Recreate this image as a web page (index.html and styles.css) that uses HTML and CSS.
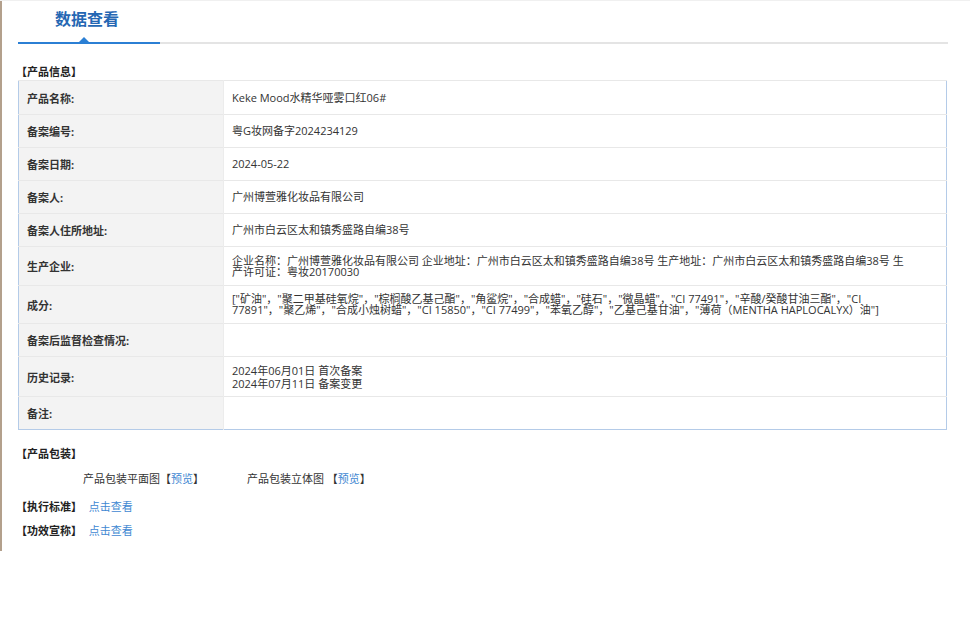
FILE: index.html
```html
<!DOCTYPE html>
<html lang="zh-CN">
<head>
<meta charset="utf-8">
<title>数据查看</title>
<link rel="stylesheet" href="styles.css">
</head>
<body>
<div class="page">
  <div class="tabs">
    <div class="tab-active">数据查看</div>
    <div class="tab-rest"></div>
  </div>

  <div class="sec-title">【产品信息】</div>
  <table class="info">
    <colgroup><col class="c-label"><col></colgroup>
    <tr class="first"><th>产品名称:</th><td>Keke Mood水精华哑雾口红06#</td></tr>
    <tr><th>备案编号:</th><td>粤G妆网备字2024234129</td></tr>
    <tr><th>备案日期:</th><td>2024-05-22</td></tr>
    <tr><th>备案人:</th><td>广州博萱雅化妆品有限公司</td></tr>
    <tr><th>备案人住所地址:</th><td>广州市白云区太和镇秀盛路自编38号</td></tr>
    <tr class="multi"><th>生产企业:</th><td>企业名称：广州博萱雅化妆品有限公司 企业地址：广州市白云区太和镇秀盛路自编38号 生产地址：广州市白云区太和镇秀盛路自编38号 生产许可证：粤妆20170030</td></tr>
    <tr class="multi ingr"><th>成分:</th><td>["矿油"，"聚二甲基硅氧烷"，"棕榈酸乙基己酯"，"角鲨烷"，"合成蜡"，"硅石"，"微晶蜡"，"CI 77491"，"辛酸/癸酸甘油三酯"，"CI 77891"，"聚乙烯"，"合成小烛树蜡"，"CI 15850"，"CI 77499"，"苯氧乙醇"，"乙基己基甘油"，"薄荷（MENTHA HAPLOCALYX）油"]</td></tr>
    <tr><th>备案后监督检查情况:</th><td></td></tr>
    <tr class="multi hist"><th>历史记录:</th><td><div class="hline">2024年06月01日 首次备案</div><div class="hline">2024年07月11日 备案变更</div></td></tr>
    <tr><th>备注:</th><td></td></tr>
  </table>

  <div class="sec-title pack-title">【产品包装】</div>
  <div class="pack-row">
    <span class="pack-item">产品包装平面图【<a class="lnk">预览</a>】</span>
    <span class="pack-item">产品包装立体图 【<a class="lnk">预览</a>】</span>
  </div>
  <div class="sec-title line-item first">【执行标准】 <a class="lnk normal">点击查看</a></div>
  <div class="sec-title line-item">【功效宣称】 <a class="lnk normal">点击查看</a></div>
</div>
</body>
</html>
```

FILE: styles.css
```css
html, body {
  margin: 0;
  padding: 0;
  background: #ffffff;
}
body {
  font-family: "Open Sans", "Noto Sans CJK SC", sans-serif;
  font-size: 11px;
  color: #333333;
  border-top: 1px solid #f0f0f0;
}
.page {
  border-left: 2px solid #b3a08c;
  padding: 0 23px 12px 16px;
  height: 538px;
}
.tabs {
  display: flex;
  align-items: flex-end;
  height: 43px;
}
.tab-active {
  position: relative;
  width: 142px;
  height: 43px;
  border-bottom: 2px solid #2b7fd4;
  box-sizing: border-box;
  padding: 5px 0 0 37px;
  font-family: "Noto Sans CJK SC", sans-serif;
  font-size: 16px;
  font-weight: bold;
  color: #2567b3;
  line-height: 24px;
}
.tab-active::after {
  content: "";
  position: absolute;
  left: 61px;
  bottom: 0;
  border-left: 5px solid transparent;
  border-right: 5px solid transparent;
  border-bottom: 5px solid #2b7fd4;
}
.tab-rest {
  flex: 1;
  height: 2px;
  background: #e4e4e4;
  margin-right: -1px;
}
.sec-title {
  font-weight: bold;
  color: #222222;
  line-height: 16px;
  margin-top: 20px;
  margin-left: -2px;
}
.info {
  width: 929px;
  border-collapse: collapse;
  border: 1px solid #b4cbe8;
  margin-top: 0;
  table-layout: fixed;
}
.c-label { width: 205px; }
.info tr { height: 33px; }
.info tr.first { height: 34px; }
.info th, .info td {
  border-top: 1px solid #e8e8e8;
  padding: 0 40px 0 8px;
  vertical-align: middle;
  text-align: left;
  line-height: 16px;
}
.info th {
  background: #f3f3f3;
  font-weight: bold;
  color: #333333;
  border-right: 1px solid #ececec;
  padding-top: 2px;
}
.info td {
  background: #ffffff;
  color: #333333;
  font-weight: normal;
}
.info tr.multi td {
  line-height: 11px;
  padding-top: 8px;
  padding-bottom: 8px;
}
.info tr.ingr td { padding-top: 7px; padding-bottom: 8px; }
.info tr.hist td { padding-top: 7px; padding-bottom: 6px; }
.hline { height: 13px; line-height: 13px; }
.pack-title { margin-top: 16px; }
.pack-row {
  margin-top: 9px;
  padding-left: 65px;
  line-height: 16px;
  display: flex;
}
.pack-item { width: 164px; }
.lnk { color: #3f88d2; text-decoration: none; }
.lnk.normal { font-weight: normal; margin-left: 4px; }
.line-item { margin-top: 8px; }
.line-item.first { margin-top: 12px; }
```
